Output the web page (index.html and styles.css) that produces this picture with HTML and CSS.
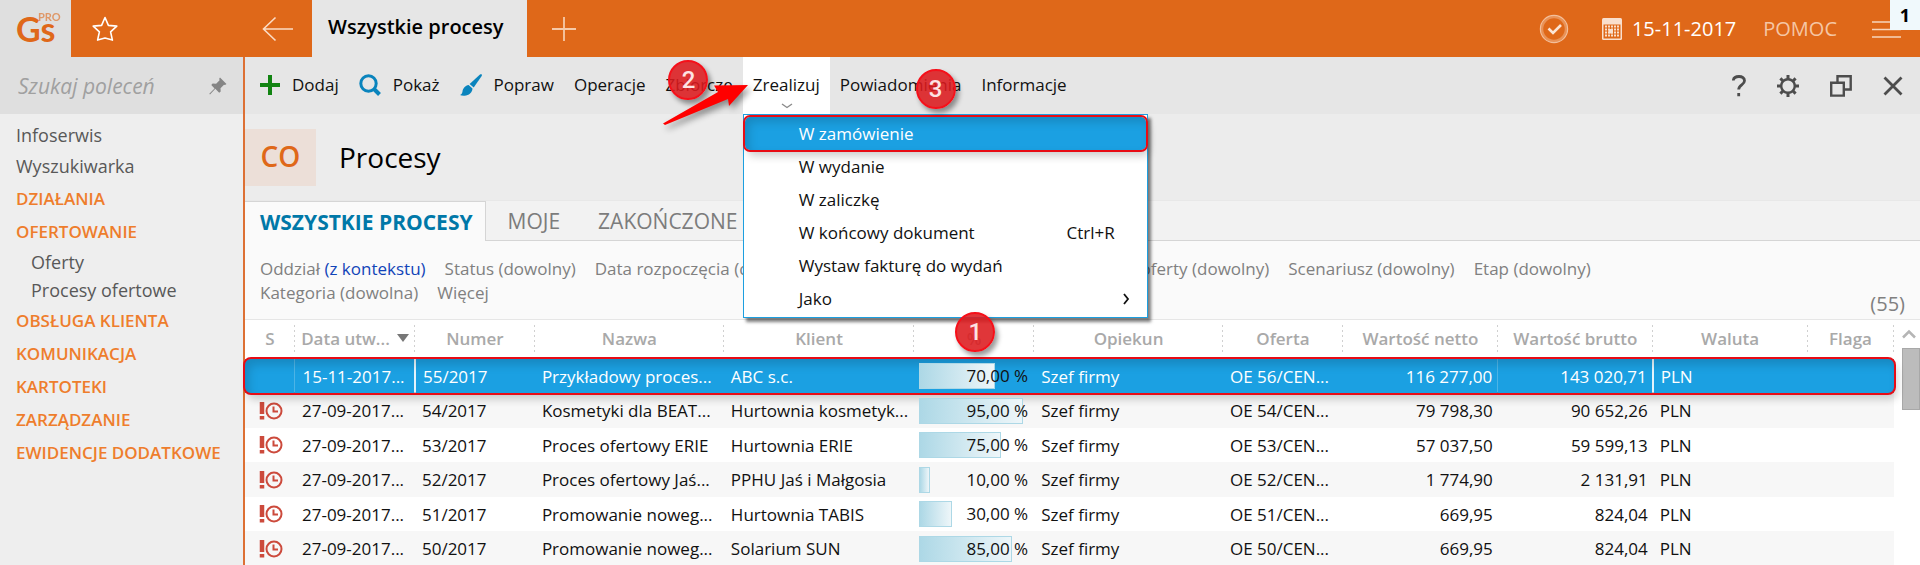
FILE: index.html
```
<!DOCTYPE html>
<html lang="pl">
<head>
    <meta charset="UTF-8">
    <meta name="viewport" content="width=device-width, initial-scale=1.0">
    <title>Wszystkie procesy</title>
    <link rel="stylesheet" href="styles.css">
</head>
<body>
    <header class="topbar">
        <a href="#" class="logo">
            <span class="logo-name">Gs</span><span class="logo-edition">PRO</span>
        </a>
        <button class="icon-btn star" aria-label="Ulubione">
            <svg width="26" height="26" viewBox="0 0 26 26" fill="none" stroke="#fff" stroke-width="1.6" stroke-linejoin="round"><path d="M13 1.5l3.4 7.9 8.4.7-6.2 5.7 1.8 8.3L13 22l-7.4 2.1 1.8-8.3L1.2 10.1l8.4-.7z"/></svg>
        </button>
        <button class="icon-btn back" aria-label="Wstecz">
            <svg width="32" height="26" viewBox="0 0 32 26" fill="none" stroke="#fbdcc5" stroke-width="1.6"><path d="M31 13H2M13.5 1.5L1.5 13l12 11.5"/></svg>
        </button>
        <a href="#" class="tab-open">Wszystkie procesy</a>
        <button class="icon-btn plus" aria-label="Nowa karta">
            <svg width="26" height="26" viewBox="0 0 26 26" fill="none" stroke="#f6c9a8" stroke-width="1.8"><path d="M1 13h24M13 1v24"/></svg>
        </button>
        <div class="top-right">
            <button class="icon-btn" aria-label="Zadania">
                <svg width="30" height="30" viewBox="0 0 30 30" fill="none"><circle cx="15" cy="15" r="12" stroke="#e99257" stroke-width="2.5"/><circle cx="15" cy="15" r="13.6" stroke="#f3bf9b" stroke-width="1.2"/><path d="M9.5 14.5l4.5 4.5 8-8" stroke="#fbe5d6" stroke-width="2.6"/></svg>
            </button>
            <a href="#" class="date">
                <svg width="20" height="22" viewBox="0 0 20 22"><rect width="20" height="22" rx="1.5" fill="#f9dfcd"/><path d="M1.500 6.500h17v14h-17z" fill="#df6819"/><path d="M3 8.500h14M3 11.500h14M3 14.500h14M3 17.500h14" stroke="#f9dfcd" stroke-width="2" stroke-dasharray="2 1"/><rect x="6.500" y="11" width="4.500" height="4.500" fill="#f9dfcd"/></svg>
                15-11-2017
            </a>
            <a href="#" class="help">POMOC</a>
            <button class="icon-btn" aria-label="Menu">
                <svg width="29" height="20" viewBox="0 0 29 20" fill="none" stroke="#f8d5bc" stroke-width="1.6"><path d="M0 3h29M0 10.500h29M0 18h29"/></svg>
            </button>
        </div>
        <span class="counter">1</span>
    </header>

    <div class="layout">
        <aside class="sidebar">
            <div class="search">
                <input type="text" placeholder="Szukaj poleceń" aria-label="Szukaj poleceń">
                <svg width="18" height="18" viewBox="0 0 18 18" fill="#858585"><path d="M11 .5L17.500 7l-1.500 1-1-.3-3.500 3.500.2 3.300-1.500 1.200-3.900-3.900L1 17.500l-.7-.7 5.200-5.400L2.300 8l1.300-1.400 3.500.2 3.500-3.500-.4-1.500z"/></svg>
            </div>
            <nav class="nav">
                <a href="#" class="nav-item">Infoserwis</a>
                <a href="#" class="nav-item">Wyszukiwarka</a>
                <a href="#" class="nav-group">DZIAŁANIA</a>
                <a href="#" class="nav-group">OFERTOWANIE</a>
                <a href="#" class="nav-sub">Oferty</a>
                <a href="#" class="nav-sub">Procesy ofertowe</a>
                <a href="#" class="nav-group">OBSŁUGA KLIENTA</a>
                <a href="#" class="nav-group">KOMUNIKACJA</a>
                <a href="#" class="nav-group">KARTOTEKI</a>
                <a href="#" class="nav-group">ZARZĄDZANIE</a>
                <a href="#" class="nav-group">EWIDENCJE DODATKOWE</a>
            </nav>
        </aside>

        <main class="content">
            <div class="toolbar">
                <button class="tool">
                    <svg width="20" height="20" viewBox="0 0 20 20" stroke="#128412" stroke-width="4"><path d="M0 10h20M10 0v20"/></svg>
                    Dodaj
                </button>
                <button class="tool">
                    <svg width="22" height="22" viewBox="0 0 22 22" fill="none" stroke="#0a84bd"><circle cx="9.500" cy="9.500" r="7.700" stroke-width="3"/><path d="M14.500 14.500l6 6" stroke-width="4"/></svg>
                    Pokaż
                </button>
                <button class="tool">
                    <svg width="22" height="22" viewBox="0 0 22 22" fill="#0a84bd"><path d="M21.500.3c.5.4.5 1 .2 1.600L13.700 13.600 9.600 9.900 20 .5c.5-.4 1-.5 1.500-.2z"/><path d="M8.600 11l3.900 3.500c-.2 4-3.500 7-8 7.200-2 .1-3.500-.2-4.500-.8 1.500-.7 2.200-1.700 2.500-3.500.4-3 2.800-5.800 6.100-6.400z"/></svg>
                    Popraw
                </button>
                <button class="tool">Operacje</button>
                <div class="tool-wrap">
                    <button class="tool">Zbiorcze</button>
                    <span class="mark mark-2">2</span>
                    <svg class="arrow" width="86" height="42" viewBox="0 0 86 42"><path d="M0 39.500L55 8 51 1.500 85 1 66 22 65 15 2 41z" fill="#f00"/></svg>
                </div>
                <div class="tool-wrap">
                    <button class="tool tool-open">
                        Zrealizuj
                        <svg class="tool-arrow" width="12" height="6" viewBox="0 0 12 6" fill="none" stroke="#8b8b8b" stroke-width="1.400"><path d="M1 1l5 3.500L11 1"/></svg>
                    </button>
                    <div class="menu">
                        <button class="menu-item menu-active">W zamówienie</button>
                        <button class="menu-item">W wydanie</button>
                        <button class="menu-item">W zaliczkę</button>
                        <button class="menu-item">W końcowy dokument <span class="shortcut">Ctrl+R</span></button>
                        <button class="menu-item">Wystaw fakturę do wydań</button>
                        <button class="menu-item">Jako
                            <svg class="submenu" width="7" height="12" viewBox="0 0 7 12" fill="none" stroke="#111" stroke-width="1.800"><path d="M1 1l4 5-4 5"/></svg>
                        </button>
                    </div>
                </div>
                <div class="tool-wrap">
                    <button class="tool">Powiadomienia</button>
                    <span class="mark mark-3">3</span>
                </div>
                <button class="tool">Informacje</button>
                <div class="window-tools">
                    <button class="icon-btn" aria-label="Pomoc">
                        <svg width="14" height="22" viewBox="0 0 14 22" fill="none" stroke="#4d4d4d" stroke-width="2.800"><path d="M1.300 5.500C1.500 3 3.800 1.500 7 1.500c3.300 0 5.500 1.700 5.500 4.300 0 4.200-5.800 4-5.800 8.700M6.700 18v3.200"/></svg>
                    </button>
                    <button class="icon-btn" aria-label="Ustawienia">
                        <svg width="22" height="22" viewBox="0 0 22 22" fill="none" stroke="#4d4d4d"><circle cx="11" cy="11" r="6.800" stroke-width="2.400"/><path d="M11 0v4M11 18v4M0 11h4M18 11h4M3.400 3.400l2.800 2.800M15.800 15.800l2.800 2.800M3.400 18.600l2.800-2.800M15.800 6.200l2.800-2.800" stroke-width="3"/></svg>
                    </button>
                    <button class="icon-btn" aria-label="Przywróć">
                        <svg width="22" height="22" viewBox="0 0 22 22" fill="none" stroke="#4d4d4d" stroke-width="2.400"><path d="M7.500 7V1.200h13.200v13.300H15M1.200 7.800h12.600v12.800H1.200z"/></svg>
                    </button>
                    <button class="icon-btn" aria-label="Zamknij">
                        <svg width="20" height="20" viewBox="0 0 20 20" fill="none" stroke="#4d4d4d" stroke-width="2.800"><path d="M1.500 1.500l17 17M18.500 1.500l-17 17"/></svg>
                    </button>
                </div>
            </div>

            <div class="title">
                <span class="title-code">CO</span>
                <h1>Procesy</h1>
            </div>

            <nav class="tabs">
                <a href="#" class="tab tab-active">WSZYSTKIE PROCESY</a>
                <a href="#" class="tab">MOJE</a>
                <a href="#" class="tab">ZAKOŃCZONE</a>
            </nav>

            <div class="filters">
                <div class="filter-list">
                    <a href="#">Oddział <b>(z kontekstu)</b></a>
                    <a href="#">Status (dowolny)</a>
                    <a href="#">Data rozpoczęcia (dowolna)</a>
                    <a href="#">Data zakończenia (dowolna)</a>
                    <a href="#">Wartość oferty (dowolny)</a>
                    <a href="#">Scenariusz (dowolny)</a>
                    <a href="#">Etap (dowolny)</a>
                </div>
                <div class="filter-list">
                    <a href="#">Kategoria (dowolna)</a>
                    <a href="#">Więcej</a>
                </div>
                <span class="count">(55)</span>
            </div>

            <div class="grid">
                <table class="list">
                    <colgroup>
                        <col class="c-s"><col class="c-m"><col class="c-m"><col class="c-l"><col class="c-l"><col class="c-m">
                        <col class="c-l"><col class="c-m"><col class="c-v"><col class="c-v"><col class="c-v"><col class="c-f">
                    </colgroup>
                    <thead>
                        <tr>
                            <th>S</th>
                            <th class="sorted">Data utw...</th>
                            <th>Numer</th>
                            <th>Nazwa</th>
                            <th>Klient</th>
                            <th class="percent">%<span class="mark mark-1">1</span></th>
                            <th>Opiekun</th>
                            <th>Oferta</th>
                            <th>Wartość netto</th>
                            <th>Wartość brutto</th>
                            <th>Waluta</th>
                            <th>Flaga</th>
                        </tr>
                    </thead>
                    <tbody id="rows"></tbody>
                </table>
                <div class="scroll">
                    <svg width="14" height="10" viewBox="0 0 14 10" fill="none" stroke="#b5b5b5" stroke-width="2.500"><path d="M1 8.500l6-6 6 6"/></svg>
                    <div class="scroll-thumb"></div>
                </div>
            </div>
        </main>
    </div>

    <script>
        const rows = [
            ['15-11-2017...', '55/2017', 'Przykładowy proces...', 'ABC s.c.', 70, 'OE 56/CEN...', '116 277,00', '143 020,71'],
            ['27-09-2017...', '54/2017', 'Kosmetyki dla BEAT...', 'Hurtownia kosmetyk...', 95, 'OE 54/CEN...', '79 798,30', '90 652,26'],
            ['27-09-2017...', '53/2017', 'Proces ofertowy ERIE', 'Hurtownia ERIE', 75, 'OE 53/CEN...', '57 037,50', '59 599,13'],
            ['27-09-2017...', '52/2017', 'Proces ofertowy Jaś...', 'PPHU Jaś i Małgosia', 10, 'OE 52/CEN...', '1 774,90', '2 131,91'],
            ['27-09-2017...', '51/2017', 'Promowanie noweg...', 'Hurtownia TABIS', 30, 'OE 51/CEN...', '669,95', '824,04'],
            ['27-09-2017...', '50/2017', 'Promowanie noweg...', 'Solarium SUN', 85, 'OE 50/CEN...', '669,95', '824,04']
        ];

        const late = `<svg width="24" height="18" viewBox="0 0 24 18" fill="none" stroke="#cc4a3c">
            <path d="M3 0v12M3 14v3.500" stroke-width="4.500"/>
            <circle cx="15" cy="9" r="7.500" stroke-width="2"/>
            <path d="M14.500 4.500v5h4.500" stroke-width="2"/></svg>`;

        document.getElementById('rows').innerHTML = rows.map((r, i) => `
            <tr class="${i === 0 ? 'selected' : ''}">
                <td>${i === 0 ? '' : late}</td>
                <td>${r[0]}</td>
                <td>${r[1]}</td>
                <td>${r[2]}</td>
                <td>${r[3]}</td>
                <td class="progress"><div class="track"><div class="bar" style="width: ${r[4]}%"></div><span>${r[4]},00 %</span></div></td>
                <td>Szef firmy</td>
                <td>${r[5]}</td>
                <td class="num">${r[6]}</td>
                <td class="num">${r[7]}</td>
                <td>PLN</td>
                <td></td>
            </tr>`).join('');
    </script>
</body>
</html>
```
FILE: styles.css
```
* {
    box-sizing: border-box;
}
body {
    margin: 0;
    font-family: "Open Sans", "Noto Sans", sans-serif;
    font-size: 17px;
    color: #111;
    background-color: #ededed;
    height: 100vh;
    overflow: hidden;
    display: flex;
    flex-direction: column;
}
a {
    color: inherit;
    text-decoration: none;
}
button {
    font: inherit;
    color: inherit;
    background: none;
    border: none;
    padding: 0;
    cursor: pointer;
}
svg {
    display: block;
    flex: none;
}
.icon-btn {
    display: flex;
    align-items: center;
    justify-content: center;
}

/* top bar */
.topbar {
    position: relative;
    display: flex;
    height: 57px;
    flex: none;
    background-color: #df6819;
}
.logo {
    display: flex;
    width: 71px;
    padding-left: 16px;
    background-color: #dfdfdf;
    color: #df6819;
    font-family: Lato, sans-serif;
}
.logo-name {
    font-size: 34px;
    font-weight: bold;
    line-height: 57px;
}
.logo-edition {
    position: absolute;
    left: 38px;
    top: 11px;
    font-size: 11px;
    line-height: 12px;
    font-weight: bold;
    opacity: 0.6;
}
.star {
    width: 68px;
}
.back {
    margin-left: 105px;
    width: 68px;
}
.tab-open {
    width: 215px;
    padding-left: 16px;
    background-color: #e6e6e6;
    color: #000;
    font-size: 20px;
    font-weight: 600;
    line-height: 54px;
    white-space: nowrap;
}
.plus {
    width: 74px;
}
.top-right {
    display: flex;
    align-items: center;
    margin-left: auto;
    margin-right: 19px;
    font-size: 20px;
    line-height: 54px;
}
.date {
    display: flex;
    align-items: center;
    gap: 10px;
    margin-left: 33px;
    color: #fff;
}
.help {
    margin: 0 35px 0 27px;
    color: #f5c6a4;
}
.counter {
    position: absolute;
    top: 0;
    right: 0;
    width: 30px;
    height: 30px;
    background-color: #f0f9fc;
    color: #000;
    font-size: 18px;
    font-weight: bold;
    line-height: 30px;
    text-align: center;
}

/* left menu */
.layout {
    display: flex;
    flex: 1;
    min-height: 0;
}
.sidebar {
    width: 245px;
    flex: none;
    border-right: 2px solid #dd7034;
    background-color: #eee;
}
.search {
    display: flex;
    align-items: center;
    height: 57px;
    padding: 0 16px 0 18px;
    background-color: #dfdfdf;
}
.search input {
    flex: 1;
    min-width: 0;
    padding: 0;
    border: none;
    background: none;
    font: inherit;
    font-size: 21px;
    font-style: italic;
}
.search input::placeholder {
    color: #a0a0a0;
}
.nav {
    display: flex;
    flex-direction: column;
    padding: 6px 0 0 16px;
    white-space: nowrap;
    color: #585858;
}
.nav-item {
    font-size: 18px;
    line-height: 31px;
}
.nav-group {
    line-height: 33px;
    font-weight: 600;
    color: #ee7d2c;
}
.nav-sub {
    padding-left: 15px;
    font-size: 18px;
    line-height: 28px;
}

/* toolbar */
.content {
    flex: 1;
    min-width: 0;
    display: flex;
    flex-direction: column;
    background-color: #ececec;
}
.toolbar {
    display: flex;
    height: 57px;
    flex: none;
    padding-left: 5px;
    background-color: #e6e6e6;
}
.tool {
    position: relative;
    display: flex;
    align-items: center;
    gap: 12px;
    height: 57px;
    padding: 0 10px 2px;
    white-space: nowrap;
}
.tool-wrap {
    position: relative;
}
.tool-open {
    background-color: #fff;
}
.tool-arrow {
    position: absolute;
    left: 38px;
    bottom: 5px;
}
.window-tools {
    display: flex;
    align-items: center;
    gap: 31px;
    margin-left: auto;
    margin-right: 17px;
}
.menu {
    position: absolute;
    z-index: 2;
    top: 57px;
    left: 0;
    width: 405px;
    padding: 2px 1px;
    border: 1px solid #1c9fe0;
    background-color: #fff;
    box-shadow: 3px 4px 3px rgba(0, 0, 0, 0.5);
}
.menu-item {
    display: flex;
    align-items: center;
    width: 100%;
    height: 33px;
    padding: 0 16px 0 54px;
}
.menu-active {
    background-color: #1ba0e2;
    color: #fff;
    border-radius: 5px;
    outline: 2px solid #e80c15;
    box-shadow: inset 4px 5px 10px rgba(0, 0, 0, 0.15), 3px 6px 8px rgba(0, 0, 0, 0.2);
}
.shortcut {
    margin-left: auto;
    margin-right: 15px;
}
.submenu {
    margin-left: auto;
}

/* numbered marks */
.mark {
    position: absolute;
    z-index: 3;
    width: 40px;
    height: 40px;
    border: 2px solid #f5101a;
    border-radius: 50%;
    background-color: rgba(220, 26, 30, 0.88);
    box-shadow: 3px 4px 5px rgba(0, 0, 0, 0.4);
    color: #fde3e3;
    font-family: Roboto, sans-serif;
    font-size: 24px;
    font-weight: 500;
    line-height: 36px;
    text-align: center;
}
.mark-1 {
    left: 41px;
    top: -8px;
}
.mark-2 {
    left: 13px;
    top: 3px;
}
.mark-3 {
    left: 86px;
    top: 12px;
}
.arrow {
    position: absolute;
    z-index: 4;
    left: 8px;
    top: 27px;
    filter: drop-shadow(3px 4px 3px rgba(0, 0, 0, 0.4));
}

/* title and tabs */
.title {
    display: flex;
    align-items: center;
    gap: 23px;
    height: 86px;
    flex: none;
}
.title-code {
    width: 71px;
    height: 57px;
    background-color: #ecdfd8;
    color: #df6819;
    font-size: 28px;
    font-weight: 600;
    line-height: 54px;
    text-align: center;
}
.title h1 {
    margin: 0;
    color: #000;
    font-size: 28px;
    font-weight: normal;
    line-height: 54px;
}
.tabs {
    display: flex;
    height: 41px;
    flex: none;
    border-top: 1px solid #e8e8e8;
    border-bottom: 1px solid #d5d5d5;
    background-color: #f2f2f2;
    color: #7c7c7c;
    font-size: 21px;
    line-height: 40px;
}
.tab {
    margin-left: 38px;
}
.tab-active {
    height: 40px;
    margin: 0 -16px 0 0;
    padding: 0 12px 0 15px;
    border: 1px solid #d5d5d5;
    border-width: 1px 1px 0 0;
    background-color: #fafafa;
    color: #0078a8;
    font-weight: bold;
}

/* filters */
.filters {
    position: relative;
    height: 78px;
    flex: none;
    padding: 16px 15px 0;
    background-color: #fafafa;
    color: #808080;
}
.filter-list {
    display: flex;
    gap: 19px;
    line-height: 24px;
    white-space: nowrap;
}
.filters b {
    color: #1144b8;
    font-weight: normal;
}
.count {
    position: absolute;
    right: 15px;
    bottom: 2px;
    font-size: 20px;
}

/* list */
.grid {
    display: flex;
    flex: 1;
    min-height: 0;
    border-top: 1px solid #e6e6e6;
    background-color: #fff;
}
.list {
    flex: 1;
    height: max-content;
    table-layout: fixed;
    border-collapse: collapse;
    white-space: nowrap;
}
.c-s { width: 50px; }
.c-m { width: 120px; }
.c-l { width: 189px; }
.c-v { width: 155px; }
.c-f { width: 86px; }
.list th {
    height: 39px;
    padding: 0 0 2px;
    background: linear-gradient(#fff 3px, transparent 3px 34px, #fff 34px), repeating-linear-gradient(#d0d0d0 0 2px, #fff 2px 5px) right / 1px 100% no-repeat;
    color: #a9a9a9;
    font-weight: 600;
}
.list .sorted::after {
    content: "";
    display: inline-block;
    margin-left: 7px;
    border: 6px solid transparent;
    border-top: 8px solid #777;
    border-bottom: 0;
    vertical-align: 3px;
}
.percent {
    position: relative;
}
.list td {
    height: 34px;
    padding: 0 6px 0 7px;
}
.list tr:nth-child(even) td {
    height: 35px;
    background-color: #f7f7f7;
}
.list td:first-child {
    padding-left: 14px;
}
.list .num {
    padding-right: 5px;
    text-align: right;
}
.list .progress {
    padding: 0 6px 0 5px;
    color: #111;
}
.track {
    position: relative;
    height: 26px;
    line-height: 26px;
    text-align: right;
}
.track span {
    position: relative;
}
.bar {
    position: absolute;
    height: 26px;
    border: 1px solid #add8e6;
    background: linear-gradient(to right, #add8e6, #eef6f9);
}
.selected {
    position: relative;
    color: #fff;
    background-color: #1ba0e2;
    border-radius: 6px;
    outline: 2px solid #e80c15;
    box-shadow: inset 4px 6px 10px rgba(0, 0, 0, 0.15), 3px 6px 8px rgba(0, 0, 0, 0.2);
}
.selected td:nth-child(2),
.selected td:nth-child(10) {
    border-right: 2px solid #e4f3fb;
}
.selected td:first-child,
.selected td:nth-child(9) {
    border-right: 1px solid #4db4e6;
}
.scroll {
    width: 26px;
    flex: none;
    padding: 9px 0 0 8px;
}
.scroll-thumb {
    height: 62px;
    margin-top: 9px;
    border: 1px solid #a8a8a8;
    background-color: #bcbcbc;
}
```
